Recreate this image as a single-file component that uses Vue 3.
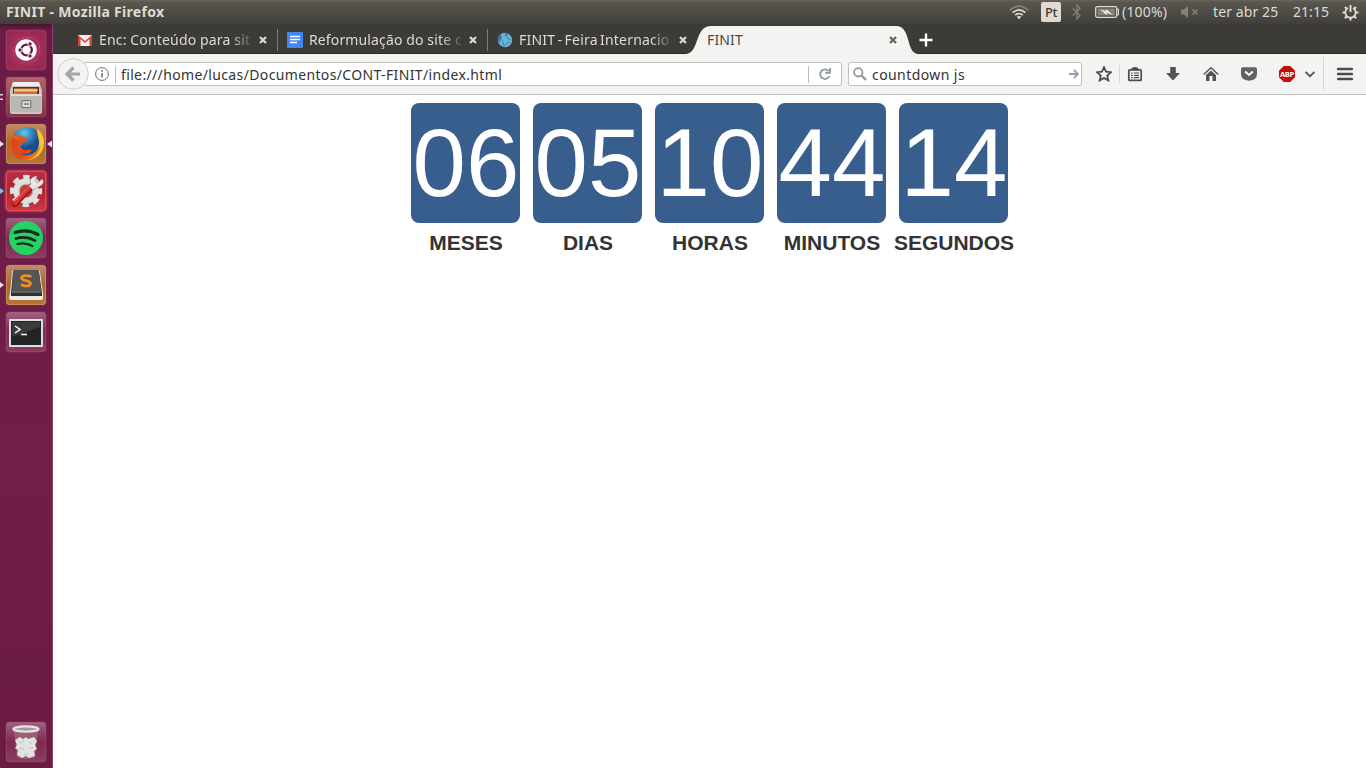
<script setup>
const counters = [
  { value: '06', label: 'MESES' },
  { value: '05', label: 'DIAS' },
  { value: '10', label: 'HORAS' },
  { value: '44', label: 'MINUTOS' },
  { value: '14', label: 'SEGUNDOS' }
]
const tabs = [
  { icon: 'mail', title: 'Enc: Conteúdo para sit', cls: 't1' },
  { icon: 'doc', title: 'Reformulação do site c', cls: 't2' },
  { icon: 'globe', title: 'FINIT - Feira Internacio', cls: 't3' }
]
const apps = ['ubuntu', 'files', 'firefox', 'settings', 'spotify', 'sublime', 'terminal', 'trash']
</script>

<template>
  <div class="desktop">
    <header class="panel">
      <span class="title">FINIT - Mozilla Firefox</span>
      <div class="tray">
        <svg class="wifi" width="20" height="16" viewBox="0 0 20 16" fill="none" stroke-width="1.7">
          <path d="M.8 6.2Q10-1.8 19.2 6.2" stroke="#85827a" />
          <path d="M3.6 8.7Q10 3.2 16.4 8.7M6.2 11.2Q10 8 13.8 11.2" stroke="#dfdbd2" />
          <path d="M7.7 12.8Q10 11 12.3 12.8L10 15.2Z" fill="#dfdbd2" />
        </svg>
        <span class="lang">Pt</span>
        <svg class="bt" width="10" height="16" viewBox="0 0 10 16" fill="none" stroke="#85827a" stroke-width="1.2"><path d="M1 4.5l7 7L5 15V1l3 3.5-7 7" /></svg>
        <svg class="battery" width="25" height="14" viewBox="0 0 25 14">
          <rect x=".7" y="1.7" width="21" height="10.6" rx="1.5" fill="none" stroke="#dfdbd2" stroke-width="1.3" />
          <rect x="2.5" y="3.5" width="17.4" height="7" fill="#85827a" /><path d="M22 4h1.5v6H22" fill="none" stroke="#dfdbd2" />
          <path d="M5 4l6 2.2V4l7 6-6.5-2v2.3z" fill="#eeeae1" />
        </svg>
        <span class="percent">(100%)</span>
        <svg class="mute" width="18" height="14" viewBox="0 0 18 14"><path d="M0 4.5h3L7 1v12L3 9.5H0z" fill="#85827a" /><path d="M11.5 4.5l5 5m0-5l-5 5" stroke="#85827a" stroke-width="1.6" /></svg>
        <span class="date">ter abr 25</span>
        <span class="clock">21:15</span>
        <svg class="power" width="17" height="17" viewBox="0 0 17 17" fill="none" stroke="#dfdbd2">
          <path d="M5.9 4a5.2 5.2 0 1 0 5.2 0" stroke-width="1.8" /><path d="M8.5 1v7" stroke-width="2" />
          <path d="M3 3l1.5 1.5M14 3l-1.5 1.5M.5 8.5H3M14 8.5h2.5M2.8 14.2l1.7-1.7M14.2 14.2l-1.7-1.7M8.5 14v2.5" stroke-width="2" />
        </svg>
      </div>
    </header>

    <div class="workspace">
      <aside class="launcher">
        <div v-for="app in apps" :key="app" class="tile" :class="app">
          <svg v-if="app === 'ubuntu'" width="40" height="40" viewBox="0 0 40 40">
            <path d="M8 26C3 12 16 3 31 10C22 4 9 7 7 18zM14 33C31 38 38 24 31 10C40 22 29 39 14 33z" fill="#e7a8bd" opacity=".45" />
            <circle cx="20" cy="20" r="10.7" fill="#fff" />
            <circle cx="20.5" cy="20" r="5.3" fill="none" stroke="#69183f" stroke-width="2.3" />
            <g fill="#69183f" stroke="#fff" stroke-width="1"><circle cx="14" cy="20" r="2.2" /><circle cx="24" cy="14" r="2.2" /><circle cx="24" cy="26" r="2.2" /></g>
          </svg>
          <svg v-else-if="app === 'files'" width="40" height="40" viewBox="0 0 40 40">
            <path d="M7 5h26l3 8v22q0 2-2 2H6q-2 0-2-2V13z" fill="#c9c7c4" /><path d="M7 5h26l1 4H6z" fill="#efeeec" />
            <path d="M7 10h26v7H7z" fill="#5c3028" /><path d="M8 11.5h23V17H8z" fill="#ef9049" /><path d="M8 12.5h24v1.2H8z" fill="#ffe3ae" /><path d="M9 15h22v2H9z" fill="#d56a2c" />
            <path d="M5 17h30v18H5z" fill="#b9b8b5" /><path d="M5 17h30v2H5z" fill="#dddcd9" />
            <rect x="15.8" y="23.7" width="9" height="7" rx="1" fill="#ddd" stroke="#777" stroke-width="1.2" /><path d="M18 27h5" stroke="#777" stroke-width="1.5" />
          </svg>
          <svg v-else-if="app === 'firefox'" width="40" height="40" viewBox="0 0 40 40">
            <defs><linearGradient id="fox" x1="0" y1="0" x2="1" y2="1"><stop stop-color="#e86a20" /><stop offset=".6" stop-color="#df4518" /><stop offset="1" stop-color="#f5a323" /></linearGradient><radialGradient id="world" cx=".4" cy=".2"><stop stop-color="#64c4eb" /><stop offset="1" stop-color="#164d91" /></radialGradient></defs>
            <circle cx="21" cy="18" r="15" fill="url(#world)" />
            <path d="M31 5c5 3 7 8 7 14c0 9-7 17-17 17l-4-4c11 1 17-6 16-15c-1-5-2-8-2-12z" fill="#fac52d" />
            <path d="M35 21C32 32 26 37 17 36C7 34 2 27 4 16L6 8l3 4c3-2 6-1 9 1l4 2c-1 3-5 2-6 5l-2 3c4 5 9 2 12 3c-4 6-8 3-11 4c8 3 15 0 20-9z" fill="url(#fox)" />
            <path d="M5 15c5-2 6 3 11 2l-3 4c-3 5 2 10 7 11c-10 1-16-6-15-17z" fill="#d94a1b" />
          </svg>
          <svg v-else-if="app === 'settings'" width="40" height="40" viewBox="0 0 40 40">
            <circle cx="20" cy="20" r="13.7" fill="none" stroke="#dfdfdd" stroke-width="5" stroke-dasharray="6.2 4.56" stroke-dashoffset="3.1" />
            <circle cx="20" cy="20" r="9.8" fill="none" stroke="#dfdfdd" stroke-width="6" /><circle cx="20" cy="20" r="6.8" fill="#c0413f" stroke="#bdbdbb" stroke-width="1" />
            <path d="M9 33L26 15" stroke="#8f1116" stroke-width="6" stroke-linecap="round" /><path d="M9 32L26 14" stroke="#dc2f30" stroke-width="4.5" stroke-linecap="round" /><path d="M9 30L24 14" stroke="#f07971" />
            <path d="M23 15l4 4 7-4c4-2 4-5 2-7l-4 4-3-2 2-5c-6 1-8 4-6 8z" fill="#e7e7e6" stroke="#999" stroke-width=".7" />
          </svg>
          <svg v-else-if="app === 'spotify'" width="40" height="40" viewBox="0 0 40 40">
            <circle cx="20" cy="20" r="17" fill="#25d365" /><g fill="none" stroke="#192a1e" stroke-linecap="round"><path d="M9 14.5q12-4 23 2" stroke-width="3.2" /><path d="M10 20.5q10-3 19 2" stroke-width="2.7" /><path d="M11.5 26q8-2 15 2" stroke-width="2.2" /></g>
          </svg>
          <svg v-else-if="app === 'sublime'" width="40" height="40" viewBox="0 0 40 40">
            <path d="M4 28L6 7q0-2 2-2h24q2 0 2 2l3 21v5q0 2-2 2H5q-2 0-2-2z" fill="#e9e9e8" /><path d="M5 28L7 7q0-2 2-2h22q2 0 2 2l3 21v3H5z" fill="#303030" /><path d="M7 7q0-2 2-2h22q2 0 2 2l2 19H6z" fill="#555554" /><path d="M6 27h29" stroke="#929292" />
            <path d="M25.5 11.5q-9-2-10 1.3c0 3.5 9 2.2 9 5.7c-1 3.5-6 3-9.5 1" fill="none" stroke="#f68c20" stroke-width="2.8" />
          </svg>
          <svg v-else-if="app === 'terminal'" width="40" height="40" viewBox="0 0 40 40">
            <rect x="3" y="7" width="34" height="28" rx="1" fill="#dedede" /><path d="M5 9h30v24H5z" fill="#222423" /><path d="M6 10h28v5L6 25z" fill="#3a3c3b" />
            <path d="M9 14l5 3.5-5 3.5M15 22.5h6" fill="none" stroke="#fff" stroke-width="1.5" />
          </svg>
          <svg v-else width="40" height="40" viewBox="0 0 40 40">
            <path d="M8 8l3 27q9 4 18 0l3-27z" fill="#a26b80" opacity=".7" /><ellipse cx="20" cy="7" rx="12.5" ry="2.6" fill="#a697a0" stroke="#e6e4e2" stroke-width="2.4" />
            <path d="M9 18l5-3 3 2 3-2 2 2 6-2 3 4-2 4 2 4-3 2 1 5-6 2-3-2-4 2-5-3 1-5-3-2 2-3z" fill="#e2e3e1" />
            <path d="M13 20l3 1 2-3M23 20l3 2M13 27l3-1 2 2M23 27l2-2 2 1M18 32l3 1" stroke="#bcc0bb" fill="none" />
          </svg>
          <svg v-if="app === 'files'" class="marker" width="4" height="9" viewBox="0 0 4 9"><path d="M0 1.8h3M0 6.2h3" stroke="#dfd6dc" stroke-width="1.5" /></svg>
          <svg v-if="['firefox','settings','sublime'].includes(app)" class="marker" width="4" height="8" viewBox="0 0 4 8"><path d="M0 1l4 3-4 3z" :fill="app === 'settings' ? '#75c3ed' : '#e8dfe5'" /></svg>
          <svg v-if="app === 'firefox'" class="focused" width="5" height="8" viewBox="0 0 5 8"><path d="M5 .5L0 4l5 3.5z" fill="#e8dfe5" /></svg>
        </div>
      </aside>

      <main class="browser">
        <nav class="tabbar">
          <div v-for="tab in tabs" :key="tab.icon" class="tab">
            <svg v-if="tab.icon === 'mail'" width="16" height="16" viewBox="0 0 16 16"><path d="M1 3h14v11H1z" fill="#f2f0ed" /><path d="M1 14V3l7 6 7-6v11h-2.5V7L8 11 3.5 7v7z" fill="#d84336" /></svg>
            <svg v-else-if="tab.icon === 'doc'" width="16" height="16" viewBox="0 0 16 16"><rect width="16" height="16" rx="1" fill="#4285f4" /><path d="M3 4.5h10M3 7.5h10M3 10.5h7" stroke="#fff" stroke-width="1.3" /></svg>
            <svg v-else width="16" height="16" viewBox="0 0 16 16"><circle cx="8" cy="8" r="7.2" fill="#68b4dd" /><path d="M2 5q4 2 5 9M8 3q3 5 6 5M13 10q-3 0-6 4" stroke="#3d728f" stroke-width=".8" fill="none" /><path d="M.5 6l2.5-4 2 3-3 6zM8 1l4 1-3 2z" fill="#407690" /></svg>
            <span class="tabtext" :class="tab.cls">{{ tab.title }}</span>
            <svg class="close" width="8" height="8" viewBox="0 0 8 8"><path d="M1 1l6 6m0-6L1 7" stroke="#dedbd5" stroke-width="2.2" /></svg>
          </div>
          <div class="tab active">
            <svg class="tabshape" width="234" height="30" viewBox="0 0 234 30"><path d="M0 30C15 30 9 2 26 2h185c16 0 9 28 23 28z" fill="#f4f3f2" /></svg>
            <span class="activename">FINIT</span>
            <svg class="close" width="8" height="8" viewBox="0 0 8 8"><path d="M1 1l6 6m0-6L1 7" stroke="#66635f" stroke-width="2.2" /></svg>
          </div>
          <svg class="plus" width="14" height="14" viewBox="0 0 14 14"><path d="M7 .5v13M.5 7h13" stroke="#fff" stroke-width="2.4" /></svg>
        </nav>

        <div class="toolbar">
          <svg class="back" width="32" height="32" viewBox="0 0 32 32"><circle cx="16" cy="16" r="15.3" fill="#f4f3f2" stroke="#d1cfcd" /><path d="M16.5 9.5L10 16l6.5 6.5M10 16h13" fill="none" stroke="#a5a5a5" stroke-width="3.2" /></svg>
          <div class="url">
            <svg width="14" height="14" viewBox="0 0 14 14" fill="none" stroke="#6d6d6d"><circle cx="7" cy="7" r="6.4" /><path d="M7 6v4.5M7 3v1.7" stroke-width="1.5" /></svg>
            <i></i><span class="address">file:///home/lucas/Documentos/CONT-FINIT/index.html</span><i class="last"></i>
            <svg class="reload" width="14" height="14" viewBox="0 0 14 14" fill="none" stroke="#8f9ba8" stroke-width="1.9"><path d="M10.5 3.8A4.8 4.8 0 1 0 11.5 9" /><path d="M12 1v4.8H7.2" /></svg>
          </div>
          <div class="search">
            <svg width="14" height="14" viewBox="0 0 14 14" fill="none" stroke="#999" stroke-width="1.8"><circle cx="5.3" cy="5.3" r="4.2" /><path d="M8.5 8.5L13 13" stroke-width="2.4" /></svg>
            <span class="query">countdown js</span>
            <svg class="go" width="10" height="10" viewBox="0 0 10 10" fill="none" stroke="#96a0ad" stroke-width="1.8"><path d="M0 5h8.5M5 1l4 4-4 4" /></svg>
          </div>
          <svg class="tool star" width="16" height="16" viewBox="0 0 16 16"><path d="M8 1.2l2 4.5 5 .5-3.8 3.3 1.1 5L8 12l-4.3 2.5 1.1-5L1 6.2l5-.5z" fill="none" stroke="#4c4c4c" stroke-width="1.8" /></svg>
          <i class="divider first"></i>
          <svg class="tool clip" width="16" height="16" viewBox="0 0 16 16"><rect x="1.8" y="3.8" width="12.4" height="10.6" rx="1" fill="#f4f3f2" stroke="#4c4c4c" stroke-width="1.7" /><path d="M4 4.2Q4.5 1 8 1t4 3.2z" fill="#4c4c4c" /><path d="M4 7h1.6M4 9.3h1.6M4 11.6h1.6M6.8 7H12M6.8 9.3H12M6.8 11.6H12" stroke="#4c4c4c" stroke-width="1.2" /></svg>
          <svg class="tool download" width="16" height="16" viewBox="0 0 16 16"><path d="M5.2 1h5.6v6H15l-7 7.5L1 7h4.2z" fill="#555" /></svg>
          <svg class="tool home" width="16" height="16" viewBox="0 0 16 16"><path d="M.7 8.5L8 1.7l7.3 6.8" fill="none" stroke="#555" stroke-width="1.5" /><path d="M3 9l5-4.5L13 9v6H9.5v-5h-3v5H3z" fill="#555" /></svg>
          <svg class="tool pocket" width="16" height="16" viewBox="0 0 16 16"><path d="M2 1.2h12q2 0 2 2V8q0 6-8 6.8Q0 14 0 8V3.2q0-2 2-2z" fill="#626262" /><path d="M4.2 5.5L8 9l3.8-3.5" fill="none" stroke="#fff" stroke-width="2" /></svg>
          <span class="abp">ABP</span>
          <svg class="chevron" width="10" height="7" viewBox="0 0 10 7"><path d="M.5 1l4.5 4.2L9.5 1" fill="none" stroke="#555" stroke-width="1.8" /></svg>
          <i class="divider second"></i>
          <svg class="menu" width="16" height="14" viewBox="0 0 16 14"><path d="M1 2h14M1 7h14M1 12h14" stroke="#4c4c4c" stroke-width="2.4" stroke-linecap="round" /></svg>
        </div>

        <section class="page">
          <div v-for="item in counters" :key="item.label" class="counter">
            <div class="card">{{ item.value }}</div>
            <div class="label">{{ item.label }}</div>
          </div>
        </section>
      </main>
    </div>
  </div>
</template>

<style scoped>
* { box-sizing: border-box; }
.desktop { width: 1366px; height: 768px; display: flex; flex-direction: column; overflow: hidden; background: #fff; font: 14px/20px "Noto Sans", sans-serif; white-space: nowrap; }
svg { flex: none; display: block; }
.panel { height: 24px; flex: none; background: linear-gradient(#69675b 0, #59574f 2px, #403f3a); color: #dfdbd2; display: flex; align-items: center; padding-left: 6px; }
.title { font-weight: 700; font-size: 14px; letter-spacing: .31px; width: 1003px; }
.tray { display: flex; align-items: center; }
.lang { width: 20px; height: 20px; margin-left: 12px; border-radius: 2px; background: #dfdbd2; color: #3c3b37; font-size: 13px; letter-spacing: -.4px; text-align: center; font-weight: 500; }
.bt { margin-left: 11px; }
.battery { margin-left: 13px; }
.percent { width: 59px; margin-left: 2px; letter-spacing: .2px; }
.date { margin-left: 14px; width: 80px; letter-spacing: .1px; }
.clock { width: 49px; letter-spacing: .05px; }
.workspace { flex: 1; display: flex; min-height: 0; }
.launcher { width: 53px; flex: none; padding: 6px 0 6px 6px; display: flex; flex-direction: column; gap: 7px; background: linear-gradient(#4b132f 0, #6b1c45 6px, #701f47 60%, #6b1c42); border-right: 1px solid #8a4269; }
.tile { position: relative; width: 40px; height: 40px; flex: none; border-radius: 4px; background: linear-gradient(#a16280, #7c294f 50%, #8b3d61); box-shadow: inset 0 0 0 1px #a2557766, 0 0 1px #b17290; }
.ubuntu { background: radial-gradient(circle, #b8406b, #982752 75%); }
.files { background: linear-gradient(#b3636c, #873040); }
.firefox, .sublime { background: linear-gradient(#c38a68, #a9672f 50%, #b77636); box-shadow: inset 0 0 0 1px #c78a57, 0 0 1px #b17290; }
.settings { background: linear-gradient(#b93145, #ae202e 50%, #c83b44); box-shadow: inset 0 0 0 1px #e84b51, 0 0 2px 1px #d33b4b; }
.trash { margin-top: auto; }
.marker { position: absolute; left: -6px; top: 16px; }
.focused { position: absolute; right: -6px; top: 16px; }
.browser { flex: 1; min-width: 0; display: flex; flex-direction: column; }
.tabbar { height: 30px; flex: none; background: #3c3b37; border-bottom: 1px solid #292825; padding-left: 15px; display: flex; }
.tab { position: relative; width: 210px; height: 30px; flex: none; display: flex; align-items: center; padding: 2px 11px 0 9px; color: #dedbd5; }
.tab:nth-child(-n+2)::after { content: ""; position: absolute; right: 0; top: 5px; height: 22px; border-right: 1px solid #7c7b76; }
.tabtext { width: 154px; margin-left: 6px; mask-image: linear-gradient(90deg, #000 132px, transparent 156px); }
.t1 { letter-spacing: .16px; }
.t2 { letter-spacing: .13px; }
.t3 { letter-spacing: .2px; word-spacing: -1.5px; }
.close { margin-left: auto; }
.active { color: #4b4a47; }
.tabshape { position: absolute; left: -13px; top: 0; }
.activename { position: relative; letter-spacing: .15px; }
.active .close { position: relative; }
.plus { margin: 9px 0 0 11px; position: relative; }
.toolbar { height: 41px; flex: none; background: #f4f3f2; border-bottom: 1px solid #c6c3c0; display: flex; align-items: center; color: #333; }
.back { margin-left: 4px; position: relative; z-index: 1; }
.url { width: 758px; height: 24px; margin-left: -5px; border: 1px solid #c3c1be; border-radius: 2px; background: #fff; display: flex; align-items: center; padding-left: 10px; }
.url i { width: 1px; height: 17px; background: #bbb; margin: 0 5px 0 6px; }
.address { letter-spacing: .36px; padding-top: 1px; }
.url i.last { margin: 0 9px 0 auto; }
.reload { margin-right: 9px; }
.search { width: 234px; height: 24px; margin-left: 6px; border: 1px solid #c3c1be; border-radius: 2px; background: #fff; display: flex; align-items: center; padding: 0 2px 0 4px; }
.query { margin-left: 5px; letter-spacing: .42px; padding-top: 1px; }
.go { margin-left: auto; }
.star { margin-left: 14px; }
.divider { width: 1px; height: 18px; margin-left: 7px; background: #d7d5d2; }
.clip { margin-left: 7px; }
.download, .home, .pocket { margin-left: 22px; }
.abp { width: 16px; height: 16px; margin-left: 22px; background: #c70d0c; clip-path: polygon(30% 0,70% 0,100% 30%,100% 70%,70% 100%,30% 100%,0 70%,0 30%); color: #fff; font: 700 7.5px/16px "Open Sans", sans-serif; text-align: center; letter-spacing: -.3px; }
.chevron { margin-left: 10px; }
.divider.second { height: 34px; margin-left: 8px; }
.menu { margin-left: 13px; }
.page { flex: 1; display: flex; gap: 13px; padding: 8px 0 0 358px; font-family: "Liberation Sans", sans-serif; }
.counter { width: 109px; display: flex; flex-direction: column; align-items: center; }
.card { width: 109px; height: 120px; flex: none; border-radius: 8px; background: #385e8d; color: #fff; font-size: 96px; line-height: 120px; text-align: center; padding-left: 1px; }
.label { margin-top: 8px; padding-left: 1px; color: #333; font-size: 21px; line-height: 24px; font-weight: 700; }
</style>
<style>
html, body { margin: 0; overflow: hidden; }
</style>
